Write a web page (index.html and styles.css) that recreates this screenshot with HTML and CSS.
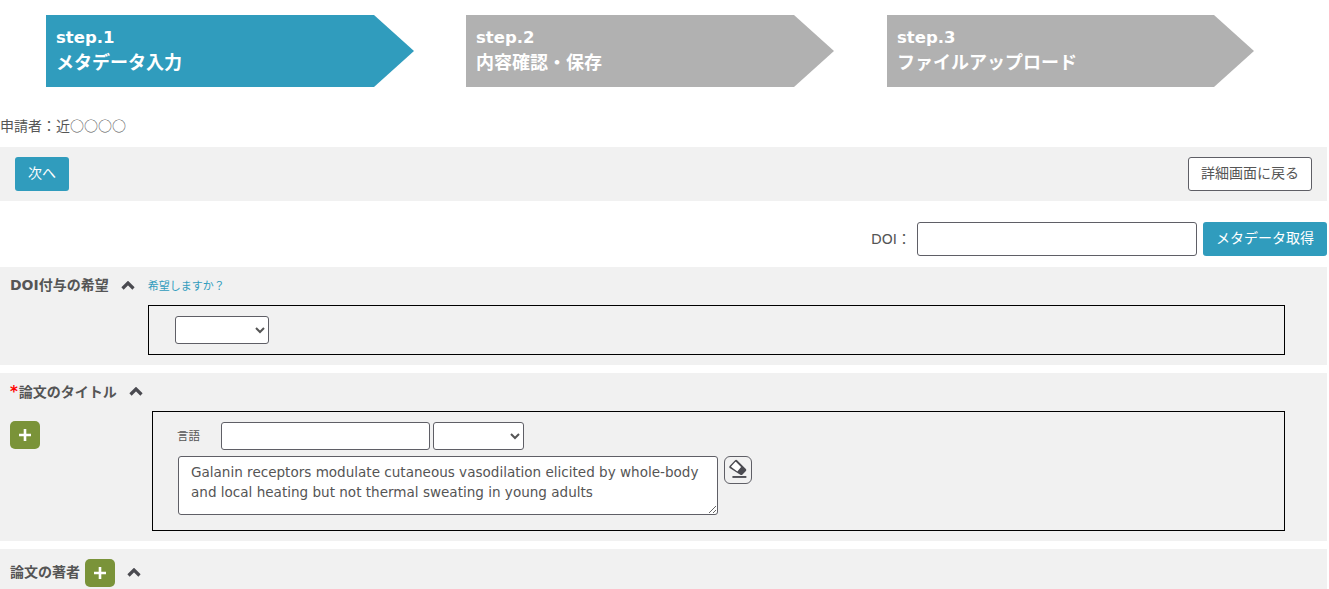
FILE: index.html
```html
<!DOCTYPE html>
<html lang="ja">
<head>
<meta charset="utf-8">
<title>メタデータ入力</title>
<link rel="stylesheet" href="styles.css">
</head>
<body>
<div class="page">
  <ol class="steps">
    <li class="step step-active">step.1<br><span class="step-name">メタデータ入力</span></li>
    <li class="step">step.2<br><span class="step-name">内容確認・保存</span></li>
    <li class="step step-last">step.3<br><span class="step-name">ファイルアップロード</span></li>
  </ol>
  <p class="applicant">申請者：近○○○○</p>
  <div class="toolbar">
    <button class="btn btn-primary btn-next">次へ</button>
    <button class="btn btn-outline">詳細画面に戻る</button>
  </div>
  <div class="doi-row">
    <label class="doi-label">DOI：</label>
    <input class="field doi-input" type="text">
    <button class="btn btn-primary btn-meta">メタデータ取得</button>
  </div>
  <section class="panel panel-doi">
    <div class="panel-head">
      <span class="panel-title">DOI付与の希望</span>
      <svg class="chev chev-doi" viewBox="0 0 14 9"><path d="M1.5 7.5 7 2l5.5 5.5" /></svg>
      <span class="hint">希望しますか？</span>
    </div>
    <div class="box box-doi">
      <select class="field select-doi"><option></option></select>
    </div>
  </section>
  <section class="panel panel-title-sec">
    <div class="panel-head head-title">
      <span class="panel-title"><span class="req">*</span>論文のタイトル</span>
      <svg class="chev chev-title" viewBox="0 0 14 9"><path d="M1.5 7.5 7 2l5.5 5.5" /></svg>
    </div>
    <div class="title-body">
      <button class="plus plus-side"><svg viewBox="0 0 14 14"><path d="M7 1v12M1 7h12" /></svg></button>
      <div class="box box-title">
        <div class="lang-row">
          <span class="lang-label">言語</span>
          <input class="field lang-input" type="text">
          <select class="field select-lang"><option></option></select>
        </div>
        <div class="text-row">
          <textarea class="field title-text">Galanin receptors modulate cutaneous vasodilation elicited by whole-body and local heating but not thermal sweating in young adults</textarea>
          <button class="eraser">
            <svg viewBox="0 0 28 28"><path class="er-solid" d="M13 3.500 22.500 13a1.500 1.500 0 0 1 0 2.100L18.600 19a1.500 1.500 0 0 1-2.100 0L5 11.800a1.500 1.500 0 0 1 0-2.100L10.900 3.500a1.500 1.500 0 0 1 2.100 0Z"/><path class="er-light" d="M12 5.500 17.300 10.800 13.300 15.600 6.800 10.900a.7.700 0 0 1 0-1L11 5.500a.7.700 0 0 1 1 0Z"/><path class="er-base" d="M8 21.500h15" /></svg>
          </button>
        </div>
      </div>
    </div>
  </section>
  <section class="panel panel-author">
    <span class="panel-title">論文の著者</span>
    <button class="plus plus-author"><svg viewBox="0 0 14 14"><path d="M7 1v12M1 7h12" /></svg></button>
    <svg class="chev chev-author" viewBox="0 0 14 9"><path d="M1.5 7.5 7 2l5.5 5.5" /></svg>
  </section>
</div>
</body>
</html>
```
FILE: styles.css
```css
* { box-sizing: border-box; }
html, body { margin: 0; padding: 0; height: 589px; overflow: hidden; background: #fff; }
body { font-family: "DejaVu Sans", "Noto Sans CJK JP", sans-serif; font-size: 14px; color: #555; }
.page { width: 1327px; }

.steps { list-style: none; margin: 0; padding: 15px 0 0 46px; display: flex; gap: 52px; }
.step {
  width: 368px; height: 72px; padding: 10px 10px 0; background: #b1b1b1; color: #fff;
  font-weight: 700; font-size: 16.500px; line-height: 25px;
  clip-path: polygon(0 0, calc(100% - 40px) 0, 100% 50%, calc(100% - 40px) 100%, 0 100%);
}
.step-name { font-size: 18px; }
.step-active { background: #309cbd; }
.step-last { width: 367px; margin-left: 1px; }

.applicant { margin: 0; padding: 28px 0 0 0; height: 60px; line-height: 20px; font-size: 14px; font-family: "Noto Sans CJK JP", sans-serif; }

.btn { font-family: inherit; font-size: 14px; border-radius: 3px; cursor: pointer; padding: 0 0 5px; }
.btn-primary { background: #309cbd; color: #fff; border: 0; }
.btn-outline { background: #fff; color: #555; border: 1px solid #5f5f66; width: 124px; height: 34px; }

.toolbar { height: 54px; background: #f1f1f1; padding: 10px 15px 0; display: flex; justify-content: space-between; align-items: flex-start; }
.btn-next { width: 54px; height: 34px; }

.doi-row { height: 66px; padding-top: 21px; display: flex; justify-content: flex-end; align-items: flex-start; }
.doi-label { line-height: 34px; margin-right: 6px; font-size: 14px; }
.field { background: #fff; border: 1px solid #5f5f66; border-radius: 3px; font-family: inherit; color: #555; }
.doi-input { width: 280px; height: 34px; margin-right: 6px; }
.btn-meta { width: 124px; height: 34px; }

.panel { background: #f1f1f1; }
.panel-doi { height: 98px; margin-bottom: 8px; padding: 0 0 0 10px; }
.panel-head { display: flex; align-items: center; height: 34px; margin-bottom: 4px; }
.panel-title { font-weight: 700; font-size: 14px; }
.req { color: #f00; margin-right: 1px; font-size: 15px; }
.chev { width: 14px; height: 9px; fill: none; stroke: #4a4a50; stroke-width: 3.200; }
.chev-doi { margin: 2px 0 0 12px; }
.hint { font-size: 11px; color: #309cbd; margin: 2px 0 0 13px; }
.box { border: 1px solid #000; }
.box-doi { margin-left: 138px; width: 1137px; height: 50px; padding: 10px 26px; }
.select-doi { width: 94px; height: 28px; display: block; }

.panel-title-sec { height: 168px; margin-bottom: 8px; padding: 0 0 0 10px; }
.head-title { height: 35px; margin-bottom: 3px; }
.chev-title { margin: 2px 0 0 12px; }
.title-body { display: flex; align-items: flex-start; }
.plus { width: 30px; height: 28px; border: 0; border-radius: 5px; background: #7a9339; padding: 0; display: flex; align-items: center; justify-content: center; flex: none; cursor: pointer; }
.plus svg { width: 14px; height: 14px; fill: none; stroke: #fff; stroke-width: 2.600; }
.plus-side { margin-top: 10px; }
.box-title { margin-left: 112px; width: 1133px; height: 120px; padding: 10px 25px 0 24px; }
.lang-row { display: flex; align-items: flex-start; height: 34px; }
.lang-label { width: 44px; font-size: 11.500px; line-height: 28px; }
.lang-input { width: 209px; height: 28px; margin-right: 3px; }
.select-lang { width: 91px; height: 28px; }
.text-row { display: flex; align-items: flex-start; padding-left: 1px; }
.title-text { width: 540px; height: 59px; padding: 5px 12px; font-size: 13.550px; line-height: 20px; display: block; }
.eraser { width: 28px; height: 28px; margin-left: 6px; background: #f1f1f1; border: 1px solid #5f5f66; border-radius: 6px; padding: 0; display: flex; cursor: pointer; }
.eraser svg { width: 26px; height: 26px; }
.er-solid { fill: #4a4a50; }
.er-light { fill: #fff; }
.er-base { stroke: #4a4a50; stroke-width: 2; fill: none; }

.panel-author { height: 40px; padding: 10px 0 0 10px; display: flex; align-items: flex-start; }
.panel-author .panel-title { line-height: 26px; }
.plus-author { margin-left: 5px; }
.chev-author { margin: 9px 0 0 12px; }
```
